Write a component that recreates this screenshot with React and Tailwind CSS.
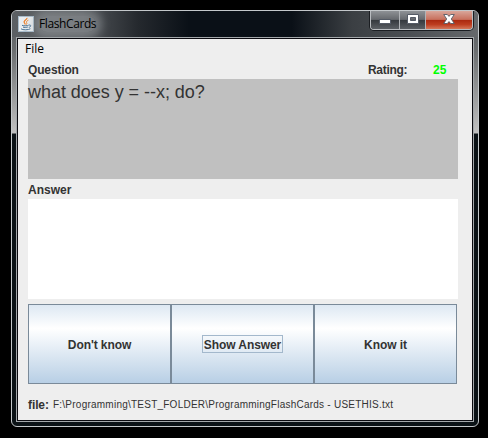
function JavaIcon() {
  return (
    <svg className="h-4 w-4 shrink-0" viewBox="0 0 16 16" fill="none">
      <rect x="0.5" y="0.5" width="15" height="15" fill="#e9edf0" stroke="#a9bccb" />
      <path d="M9 1.8C9.4 3.8 5 4.5 6.2 6.5C6.6 7.2 7.2 7.8 7.4 8.5" stroke="#ee7d22" strokeWidth="1.2" />
      <path d="M10.4 4.2C8.2 5.2 8 6 8.8 7C9.1 7.6 8.8 8.2 8.4 8.6" stroke="#f08c3a" strokeWidth="1" />
      <path d="M4 9.3C4.6 10 9.8 9.9 10.6 9.2M5 11.1C6 11.6 8.8 11.6 9.8 11M3 12.8C4.5 14.3 11 14 12.4 12.7M10.8 9.1C13.4 8.3 13.4 10.9 10.8 11.4" stroke="#4d7595" strokeWidth="1" />
    </svg>
  );
}

function WindowControls() {
  return (
    <div className="mr-[5px] flex h-[19px] w-[103px] overflow-hidden rounded-b-[4px] border border-t-0 border-[#b9bcc0] shadow-[0_0_0_1px_#1b1e22]">
      <div className="flex w-[29px] justify-center border-r border-[#b0b3b7] bg-[linear-gradient(#8e9195_0%,#66696e_47%,#34383d_50%,#5b5f64_100%)] pt-[8px]">
        <svg width="12" height="5" viewBox="0 0 12 5">
          <rect x="0.5" y="0.5" width="11" height="4" fill="#fff" stroke="#555b66" />
        </svg>
      </div>
      <div className="flex w-[26px] justify-center border-r border-[#b0b3b7] bg-[linear-gradient(#8e9195_0%,#66696e_47%,#34383d_50%,#5b5f64_100%)] pt-[3px]">
        <svg width="12" height="10" viewBox="0 0 12 10">
          <path fillRule="evenodd" d="M0.5 0.5H11.5V9.5H0.5ZM3.5 3.5V6.5H8.5V3.5Z" fill="#fff" stroke="#555b66" />
        </svg>
      </div>
      <div className="flex flex-1 justify-center bg-[linear-gradient(#d9a69a_0%,#c8705d_47%,#a9270f_50%,#bd3d20_75%,#d4775a_100%)] pt-[3px]">
        <svg width="12" height="10" viewBox="0 0 12 10">
          <path d="M0.7 0.5H4.3L6 2.4L7.7 0.5H11.3L8.3 5L11.3 9.5H7.7L6 7.6L4.3 9.5H0.7L3.7 5Z" fill="#fff" stroke="#555b66" strokeWidth="0.9" />
        </svg>
      </div>
    </div>
  );
}

const buttonClass =
  "flex h-[80px] w-[143px] items-center justify-center border border-[#7a8a99] bg-[linear-gradient(#dde8f3_0%,#ffffff_30%,#b8cfe5_100%)] text-[12px] font-bold leading-[14px] tracking-[-0.08px]";

export default function App() {
  return (
    <div className="h-[438px] w-[488px] bg-black pl-[11px] pt-[10px] font-['Liberation_Sans',Arial,sans-serif] text-[#333333]">
      <div className="flex h-[417px] w-[468px] flex-col overflow-hidden rounded-[6px] border border-[#c3c7ca] bg-[linear-gradient(#53575a_0px,#6b6e70_40px,#c0c0c0_122px,#0b1216_123px,#0b1216_100%)]">
        <div className="flex h-[26px] shrink-0 justify-between bg-[linear-gradient(90deg,#5b5f63_0%,#53575b_15%,#25292e_27%,#0a1017_38%,#0a1017_60%,#3b3f43_73%,#4b4f53_85%,#66696c_100%)]">
          <div className="flex items-center pl-[6px]">
            <JavaIcon />
            <div className="ml-[5px] rounded-full bg-[#a0a4a7]/50 text-[12px] leading-[16px] tracking-[-0.4px] text-black shadow-[0_0_8px_6px_rgba(160,164,167,0.5)] font-['Open_Sans','Noto_Sans',sans-serif]">
              FlashCards
            </div>
          </div>
          <WindowControls />
        </div>
        <div className="mx-[4px] h-[385px] w-[458px] shrink-0 border border-[#a4a8ab]">
          <div className="flex h-[383px] flex-col border border-[#0b0b10] bg-[#eeeeee]">
            <div className="h-[22px] pl-[7px] pt-[2px] text-[12px] leading-[16px] text-black font-['Open_Sans','Noto_Sans',sans-serif]">File</div>
            <div className="flex h-[18px] pl-[10px] text-[12px] font-bold leading-[18px]">
              <span className="w-[340px] tracking-[-0.15px]">Question</span>
              <span className="w-[65px] tracking-[-0.3px]">Rating:</span>
              <span className="text-[#00ff00]">25</span>
            </div>
            <div className="ml-[10px] h-[100px] w-[430px] bg-[#c0c0c0] pt-[3px] text-[18px] leading-[21px] tracking-[-0.04px]">what does y = --x; do?</div>
            <div className="h-[20px] pl-[10px] text-[12px] font-bold leading-[22px]">Answer</div>
            <div className="ml-[10px] h-[100px] w-[430px] bg-white" />
            <div className="ml-[10px] mt-[5px] flex">
              <button className={buttonClass}><span className="pt-[2px]">Don't know</span></button>
              <button className={buttonClass}>
                <span className="flex h-[18px] w-[81px] items-center justify-center whitespace-nowrap border border-[#a3b8cc] pt-[2px]">Show Answer</span>
              </button>
              <button className={buttonClass}><span className="pt-[2px]">Know it</span></button>
            </div>
            <div className="flex items-center pl-[10px] pt-[13px] leading-[16px]">
              <span className="w-[25px] text-[12px] font-bold tracking-[-0.1px]">file:</span>
              <span className="whitespace-nowrap text-[10px] tracking-[0.235px]">F:\Programming\TEST_FOLDER\ProgrammingFlashCards - USETHIS.txt</span>
            </div>
          </div>
        </div>
      </div>
    </div>
  );
}
